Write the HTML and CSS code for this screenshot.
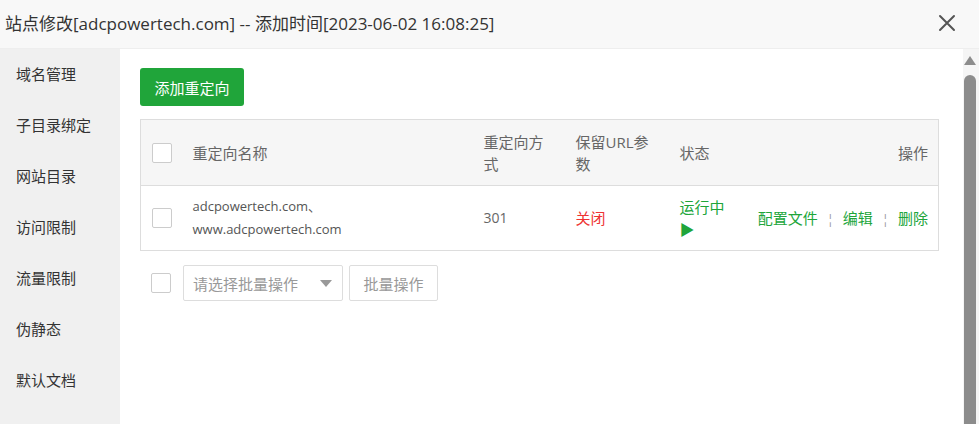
FILE: index.html
```html
<!DOCTYPE html>
<html lang="zh-CN">
<head>
<meta charset="utf-8">
<title>站点修改</title>
<link rel="stylesheet" href="styles.css">
</head>
<body>
<div class="dialog">
  <div class="header">
    <div class="title">站点修改[adcpowertech.com] -- 添加时间[2023-06-02 16:08:25]</div>
    <svg class="close" width="18" height="18" viewBox="0 0 18 18"><path d="M2 2 L16 16 M16 2 L2 16" stroke="#555" stroke-width="2" stroke-linecap="round"/></svg>
  </div>
  <div class="body">
    <div class="sidebar">
      <div class="nav-item">域名管理</div>
      <div class="nav-item">子目录绑定</div>
      <div class="nav-item">网站目录</div>
      <div class="nav-item">访问限制</div>
      <div class="nav-item">流量限制</div>
      <div class="nav-item">伪静态</div>
      <div class="nav-item">默认文档</div>
    </div>
    <div class="main">
      <button class="btn-add">添加重定向</button>
      <table class="grid">
        <colgroup>
          <col class="c1"><col class="c2"><col class="c3"><col class="c4"><col class="c5"><col class="c6">
        </colgroup>
        <thead>
          <tr>
            <th><span class="cb"></span></th>
            <th>重定向名称</th>
            <th>重定向方式</th>
            <th>保留URL参数</th>
            <th>状态</th>
            <th class="right">操作</th>
          </tr>
        </thead>
        <tbody>
          <tr>
            <td><span class="cb"></span></td>
            <td class="name">adcpowertech.com、<br>www.adcpowertech.com</td>
            <td class="num">301</td>
            <td class="off">关闭</td>
            <td class="on">运行中 ▶</td>
            <td class="right ops"><a>配置文件</a><span class="sep">¦</span><a>编辑</a><span class="sep">¦</span><a>删除</a></td>
          </tr>
        </tbody>
      </table>
      <div class="batch">
        <span class="cb"></span>
        <div class="select"><span>请选择批量操作</span><span class="caret"></span></div>
        <button class="btn-batch">批量操作</button>
      </div>
    </div>
    <div class="scrollbar">
      <div class="arrow"></div>
      <div class="thumb"></div>
    </div>
  </div>
</div>
</body>
</html>
```
FILE: styles.css
```css
* { box-sizing: border-box; }
html, body { margin: 0; padding: 0; }
body {
  width: 979px;
  height: 424px;
  overflow: hidden;
  font-family: "Open Sans", "Noto Sans CJK SC", sans-serif;
  color: #333;
  background: #fff;
}
.dialog { display: flex; flex-direction: column; height: 424px; }
.header {
  height: 49px;
  flex: none;
  background: #f8f8f8;
  border-bottom: 1px solid #eee;
  display: flex;
  align-items: center;
  justify-content: space-between;
  padding: 0 23px 4px 5px;
}
.title { font-size: 17px; color: #333; letter-spacing: 0; }
.close { display: block; margin-top: 2px; }
.body { flex: 1; display: flex; min-height: 0; }
.sidebar {
  width: 120px;
  flex: none;
  background: #f0f0f0;
}
.nav-item {
  height: 51px;
  line-height: 51px;
  padding-left: 16px;
  font-size: 15px;
  color: #333;
  padding-bottom: 2px;
}
.main {
  flex: 1;
  padding: 19px 24px 0 20px;
}
.btn-add {
  display: block;
  width: 104px;
  height: 38px;
  border: none;
  border-radius: 3px;
  background: #20a53a;
  color: #fff;
  font-family: inherit;
  font-size: 15px;
  padding: 0;
  margin-bottom: 13px;
}
.grid {
  width: 798px;
  table-layout: fixed;
  border-collapse: collapse;
  border: 1px solid #ddd;
  font-size: 15px;
}
.c1 { width: 40px; }
.c2 { width: 291px; }
.c3 { width: 92px; }
.c4 { width: 104px; }
.c5 { width: 78px; }
.c6 { width: 193px; }
.grid th {
  background: #f6f6f6;
  height: 66px;
  font-weight: normal;
  color: #666;
  text-align: left;
  padding: 0 12px;
  line-height: 22px;
  border-bottom: 1px solid #ddd;
}
.grid th:first-child, .grid td:first-child { padding: 0 0 0 11px; }
.grid td {
  height: 65px;
  padding: 0 12px;
  color: #666;
  line-height: 22px;
  vertical-align: middle;
}
.grid .right { text-align: right; padding-right: 10px; }
.cb {
  display: inline-block;
  width: 20px;
  height: 20px;
  border: 1px solid #ccc;
  border-radius: 2px;
  background: #fff;
  vertical-align: middle;
}
.grid th .cb, .grid td .cb { display: block; }
.grid td.name { font-size: 13px; line-height: 23px; color: #555; }
.grid td.num { font-size: 14px; }
.grid td.off { color: #e33; }
.grid td.on { color: #20a53a; }
.ops a { color: #20a53a; }
.sep { color: #999; margin: 0 9px; font-size: 13px; }
.batch {
  display: flex;
  align-items: center;
  margin-top: 14px;
  margin-left: 11px;
}
.batch .cb { margin-right: 12px; }
.select {
  width: 160px;
  height: 36px;
  border: 1px solid #ddd;
  border-radius: 2px;
  display: flex;
  align-items: center;
  justify-content: space-between;
  padding: 0 10px 0 9px;
  font-size: 15px;
  color: #999;
}
.caret {
  width: 0; height: 0;
  border-left: 6px solid transparent;
  border-right: 6px solid transparent;
  border-top: 7px solid #999;
}
.btn-batch {
  margin-left: 6px;
  width: 89px;
  height: 36px;
  border: 1px solid #ddd;
  border-radius: 2px;
  background: #fff;
  font-family: inherit;
  font-size: 15px;
  color: #999;
  padding: 0;
}
.scrollbar {
  width: 17px;
  flex: none;
  background: #f5f5f5;
  display: flex;
  flex-direction: column;
  align-items: center;
  padding: 7px 4px 0 1px;
}
.arrow {
  width: 0; height: 0;
  border-left: 6px solid transparent;
  border-right: 6px solid transparent;
  border-bottom: 9px solid #8c8c8c;
}
.thumb {
  margin-top: 10px;
  width: 12px;
  flex: 1;
  background: #8c8c8c;
  border-radius: 6px 6px 0 0;
}
```
